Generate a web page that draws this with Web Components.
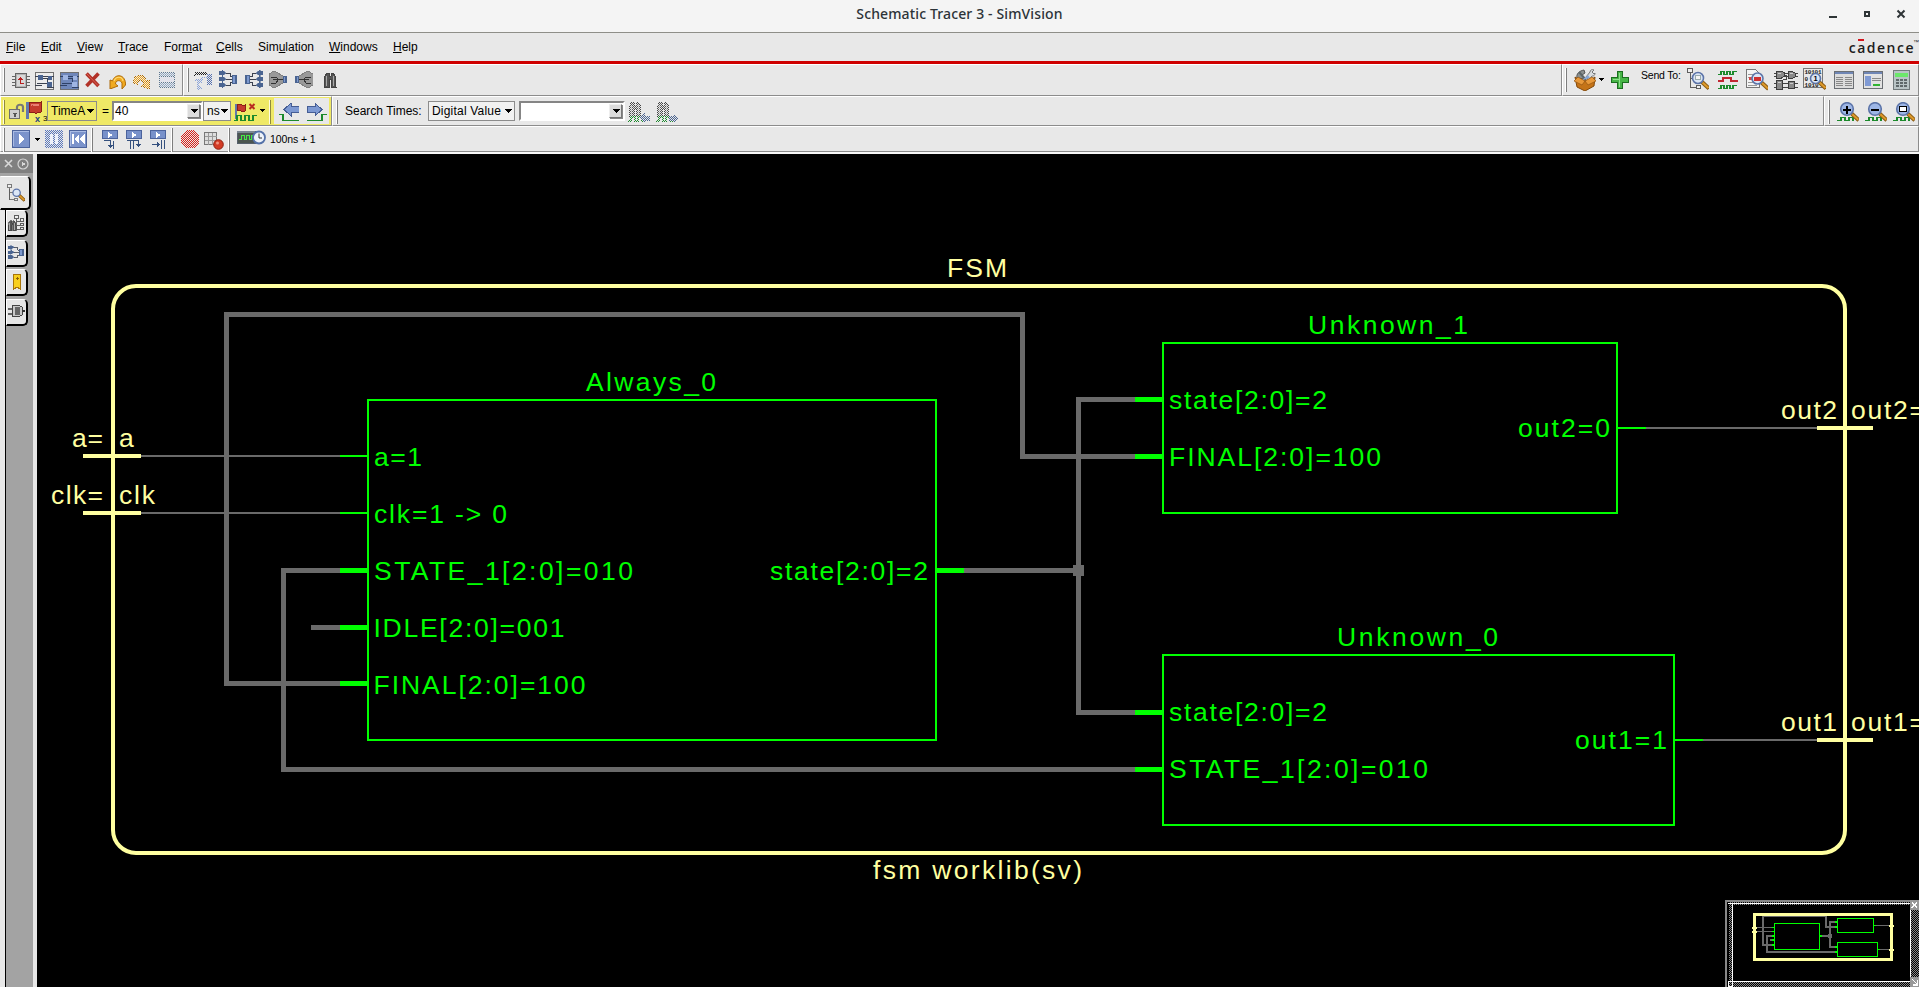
<!DOCTYPE html>
<html lang="en">
<head>
<meta charset="utf-8">
<title>Schematic Tracer 3 - SimVision</title>
<style>
html,body{margin:0;height:100%;overflow:hidden;background:#e8e8e8}
body{font:12px "Liberation Sans",Arial,sans-serif;color:#000}
</style>
</head>
<body>
<sim-window></sim-window>
<script>
const r=(x,y,w,h,f,s)=>`<rect x="${x}" y="${y}" width="${w}" height="${h}" fill="${f||'none'}"${s?` stroke="${s}"`:''}/>`;
const p=(d,f,s,w)=>`<path d="${d}" fill="${f||'none'}"${s?` stroke="${s}" stroke-width="${w||1}"`:''}/>`;
const soft=s=>`<g shape-rendering="auto">${s}</g>`;
const glass=(cx,cy,R,fill)=>soft(`<path d="M${cx+R-1.5} ${cy+R-1.5}L${cx+R+5.5} ${cy+R+5}" stroke="#8a5a12" stroke-width="4"/><path d="M${cx+R-1} ${cy+R-1}L${cx+R+5} ${cy+R+4.5}" stroke="#dd9a2c" stroke-width="2"/><circle cx="${cx}" cy="${cy}" r="${R}" fill="${fill||'#dbe6f6'}" stroke="#5c74a8" stroke-width="1.6"/>`);
const wave=(x,y)=>p(`M${x} ${y+4}h3v-4h4v4h3v-4h4v4h3v-4h4`,'', '#1c8a2c',1.6);
const dither=s=>`<defs><pattern id="k" width="2" height="2" patternUnits="userSpaceOnUse"><rect width="1" height="1" fill="#fff"/><rect x="1" y="1" width="1" height="1" fill="#fff"/></pattern><mask id="m" maskUnits="userSpaceOnUse" x="0" y="0" width="40" height="40"><rect width="40" height="40" fill="url(#k)"/></mask></defs><g mask="url(#m)">${s}</g>`;
const B='#4a6491', L='#7d99cf', K='#3c4250', G='#5e5e5e';
const schem=(bg,b,l)=>r(.5,.5,18,17,bg,'#707070')+p('M0 4.5h19M0 13.5h7M12 15.5h7M8 6.5h4.5v5h4M2 11.5h10','',l)+r(3,3,5,5,b)+r(13,4,4,4,b)+r(12,10,5,5,b);
const fan=r(0,1,5,4,B)+r(0,7,5,4,B)+r(0,13,5,4,B)+p('M4 3h4M4 9h4M4 15h4M3 0v6l4-3zM3 6v6l4-3zM3 12v6l4-3z',B,B,.6)+p('M7 3.5h4v3h4M7 9.5h7M7 15.5h4v-3h4','',K)+r(13,5,5,9,B)+r(14,6,2,7,L);
const binoc=p('M1 4l2-3h2v3l1 1 1-1V1h2l2 3 1 11H7V7H5v8H0z','#555','#444')+p('M2.5 4v10M9.500 4v10','','#aaa',1.5);
const cone=p('M0 3l5-3 11 6v5L5 17l-5-3z','#999','#808080')+p('M2 6h5l2 2.500h5M4 8.500h9M2 12h5l2-3','','#333')+r(14,5,4,7,B)+r(15,6,1,5,L);
const arrowL='M1 6.500l7-6.500v3.500h8v6H8v3.500z';
const playTile=s=>r(.5,.5,17,17,'#7b93cb','#4c639c')+p('M1.5 16V1.5H17','','#a9bbe4')+s;
const tree=r(.5,.5,5,4,'#eee',G)+p('M3.5 5v14.500M4 10.500h5M4 19.500h5','',G)+r(9.500,17.500,4,3,'#eee',G);
const step=s=>r(.5,.5,15,8,'#7891ca','#4c639c')+p('M6 2l5 3-5 3z','#fff')+s;
const ICONS={
 chip:[18,16,p('M0 3.5h18M0 6.500h18M0 9.500h18M0 12.500h18','','#666')+r(3.500,.5,11,14,'#b4b4b4','#666')+r(5,2,8,11,'#d8d8d8')+p('M12 10.500H8.500V5.500','','#b92020',1)+p('M6.500 6.500l2-2 2 2z','#b92020','#b92020',1)],
 schema:[20,18,schem('#ececec',B,K)], schemb:[19,18,schem('#6f87ba','#9fb5e2','#2f4268')],
 del:[15,16,soft(p('M1.500 1.500l12 12.500M13.500 1.500L1.500 14','','#b23228',3.6)+p('M2 2l11 11.500','','#d86052',1))],
 undo:[17,15,soft(p('M1 6v9l8-3-2.500-2c0-4 5-4.500 6.500-1v6l3.500-4C17 0 6-1 3.500 7z','#f0aa20','#ad6b0a')+p('M5 7C7 2 13 2 14 7','','#ffda75',1.200))],
 redo:[17,15,dither(p('M16 6v9l-8-3 2.500-2c0-4-5-4.500-6.500-1v2L.5 8C0 0 11-1 13.500 7z','#f0a010','#b06b00'))],
 dtable:[16,17,dither(r(.5,.5,15,15,'#8fa6c4','#5c7690')+p('M0 4.500h16M0 10.500h16','','#5c7690')+r(1,5,14,5,'#dde'))],
 dots:[19,19,dither(p('M1 1h12v3H1zM0 3h2v2H0z','#222')+r(13,3,5,11,'#5570b0')+p('M0 9h8v-3h5M3 8l5 3-5 3zM3 14l5 3-5 2z','#8ba4da','#8ba4da'))],
 fanin:[19,18,fan], fanout:[19,18,`<g transform="matrix(-1 0 0 1 19 0)">${fan}</g>`],
 cone:[19,17,cone],
 cone2:[19,17,`<g transform="matrix(-1 0 0 1 19 0)">${cone}</g>`],
 binoc:[13,16,binoc],
 box:[22,22,soft(p('M3 9C2 5 5 2 10 1l1 3-3 2 3 4z','#8b9090','#555')+p('M12 8l4-5c0-2 2-3 4-2l-2 2 2 2 1-1c0 3-2 3-3 3l-3 4z','#d7dcdf','#777')+p('M5 3l7 8','','#5d6668',2)+p('M8 11l6-5 2 3','#86a6d6')+p('M1 8l3 2 7 2 7-2 3-2-1 9-9 5-8-4z','#c57418','#82480a')+p('M0 12l4-4 7 4-3 4zM22 12l-4-4-7 4 3 4z','#e8993a','#935510',.7))],
 plus:[18,18,p('M6.500.500h5v6h6v5h-6v6h-5v-6h-6v-5h6z','#46b446','#1b6e20')+p('M8 2v6H2M8 9v7','','#8fe08c')],
 tree:[22,22,tree+glass(11,10,5.5)+r(8.500,7.500,5,4,'#f4f4f4','#9aa')],
 waves:[20,20,p('M0 4.500h3v-3h3v3h3v-3h3v3h3v-3h4','','#1c8a2c',1.6)+p('M0 11h5V8h8v3h7','','#c22732',1.6)+p('M0 18.500h3v-3h3v3h3v-3h3v3h3v-3h4','','#1c8a2c',1.6)],
 doc:[22,22,p('M.500.500h9l4 4v14H.500z','#f4f4f4','#777')+p('M2 5.500h8M2 8.500h7M2 13.500h8M2 16.500h9','','#999')+r(3,8,4,3,'#d64b4b')+glass(11.500,9.500,5.500)+r(8,8,7,4,'#d02f2f')],
 gates:[24,20,p('M0 3.500h24M0 6.500h24M0 13.500h24M0 17.500h24M10 5.500h2v4h-3','','#444')+p('M2.500 1h5l3 2v3l-3 2h-5zM14.500 1.500h4l3 2v3l-3 2h-4zM2.500 10.500h6v9h-6zM14.500 11.500h6v7h-6z','#8a8a8a','#3d3d3d')+p('M4 3h3M16 3.500h3M4 12h3M16 13h3','','#ccc')],
 binary:[23,22,r(.5,.5,19,19,'#e9e9e9','#777')+`<g font-family="Liberation Mono" font-size="6" font-weight="bold" fill="#222"><text x="1.500" y="6" textLength="17">10101</text><text x="1.500" y="12.700">0</text><text x="1.500" y="19" textLength="14">1010</text></g>`+glass(12.500,10.500,5)+`<text x="10.500" y="13.300" font-family="Liberation Sans" font-size="7.500" font-weight="bold">1</text>`],
 table:[20,19,r(.5,.5,19,17,'#dcdcdc','#6b6f74')+r(1,1,18,2,'#6f86b5')+p('M2 6.500h7M11 6.500h7M2 8.500h7M11 8.500h7M2 10.500h7M11 10.500h7M2 12.500h7M11 12.500h7M2 14.500h7M11 14.500h7','','#888')],
 win:[20,19,r(.5,.5,19,17,'#e2e2e2','#6b6f74')+r(1,1,18,2,'#6f86b5')+r(2,5,6,10,'#7f9ad4')+p('M9 7.500h9M9 9.500h9','','#888')+r(10,13,7,2,'#32b432')],
 calc:[17,20,r(.5,.5,16,19,'#b9c4c6','#727a7c')+r(2,3,13,4,'#6be86b')+p('M3 10h2.500M7 10h2.500M11 10h2.500M3 13h2.500M7 13h2.500M11 13h2.500M3 16h2.500M7 16h2.500M11 16h2.500','','#60696b',1.800)],
 lockflag:[38,22,soft(`<path d="M8 8V6c0-3 6-3 6 0v5" fill="none" stroke="#777" stroke-width="2.200"/>`)+r(.5,8.500,10,9,'#cfcfcf','#6f6f6f')+p('M4 12.500h4M6 13v3','','#555',1.5)+r(17,1,3,17,'#6278ad')+p('M20 2c4-3 5 2 12-1v10c-6 3-8-1-12 1z','#c43b2c','#8c1e16')+p('M22 4c3-1 5 1 8 0','','#e98172',1.5)+`<g font-family="Liberation Sans" font-weight="bold"><text x="26" y="20.500" font-size="9" fill="#223f80">x</text><text x="34" y="20" font-size="8" font-weight="normal">3</text></g>`],
 flagx:[24,19,r(1,1,2,15,'#6278ad')+p('M3 2c3-2 4 1 8 0v6c-3 1-5-1-8 0z','#c43b2c','#8c1e16')+soft(p('M15.500 1l5 5M20.500 1l-5 5','','#b92a20',2))+p('M0 17.500h3v-5h4v5h4v-5h4v5h4v-5h4','','#1c8a2c',1.400)],
 left:[20,19,p('M0 11.500h4v6h16','','#1c8a2c',1.600)+`<g transform="translate(4 0)">${p(arrowL,'#7d99d2','#455d94')}</g>`],
 right:[20,19,p('M0 17.500h15v-6h5','','#1c8a2c',1.600)+`<g transform="matrix(-1 0 0 1 16 0)">${p(arrowL,'#7d99d2','#455d94')}</g>`],
 binl:[22,21,dither(`<g transform="translate(1 0)">${binoc}</g>`+wave(0,16)+p('M12 17l4-4v2h5v4h-5v2z',B,B))],
 binr:[22,21,dither(`<g transform="translate(1 0)">${binoc}</g>`+wave(0,16)+p('M22 17l-4-4v2h-5v4h5v2z',B,B))],
 zin:[22,21,p('M0 18.500h4v-3h4v3h4v-3h4v3','','#1c8a2c',1.6)+glass(10,7,6.300,'#9db6e6')+p('M6 7.500h8M10 3.500v8','','#000',2)],
 zout:[22,21,p('M0 18.500h4v-3h4v3h4v-3h4v3','','#1c8a2c',1.6)+glass(10,7,6.300,'#9db6e6')+p('M6 7.500h8','','#000',2)],
 zfit:[22,21,p('M0 18.500h4v-3h4v3h4v-3h4v3','','#1c8a2c',1.6)+glass(10,7,6.300,'#9db6e6')+r(6.500,4.500,7,5,'#fff','#000')],
 play:[18,18,playTile(p('M7 4l6 5-6 5z','#fff'))],
 pause:[18,18,dither(r(0,0,18,18,'#5a78bc'))+r(5,4,3,10,'#eef2fb')+r(10,4,3,10,'#eef2fb')],
 rew:[18,18,playTile(r(3,4,2,10,'#fff')+p('M10 4v10L5 9zM15.500 4v10l-5-5z','#fff'))],
 step1:[16,19,step(p('M2 10.500h6.500v7M11.500 11v8','','#34507e',1)+p('M5.500 14.500h6L8.500 18z','#34507e'))],
 step2:[16,19,step(p('M1 10.500h11.500v6M4.500 11v8M7.500 11v8','','#34507e',1)+p('M9.500 14h6l-3 3.500z','#34507e'))],
 step3:[16,19,step(p('M2 14.500h6M11.500 10v9M14.500 10v9','','#34507e',1)+p('M6.500 11.500v6l3-3z','#34507e'))],
 stop:[18,18,dither(p('M5 0h8l5 5v8l-5 5H5l-5-5V5z','#d81f18'))],
 rec:[20,18,r(.5,.5,12,12,'#ddd','#777')+p('M4.500 1v12M8.500 1v12M1 4.500h12M1 8.500h12','','#999')+soft('<circle cx="14.500" cy="12.500" r="4.800" fill="#d23c26" stroke="#8e2112"/><circle cx="13.500" cy="11" r="1.500" fill="#f09380"/>')],
 simclock:[29,16,r(0,1,18,12,'#4b5550','#56606c')+r(0,1,18,2,'#7a8590')+p('M2 9.500h2v-4h3v4h2v-4h3v4h2v-4h2','','#46e746')+soft('<circle cx="22" cy="7.500" r="6" fill="#eef3fb" stroke="#5471a8" stroke-width="1.800"/><path d="M22 3.500v4.500h3" fill="none" stroke="#333"/>')],
 drop:[8,4,p('M0 0h8L4 4z','#000')], sdrop:[5,3,p('M0 0h5L2.500 3z','#000')],
 stree:[18,18,`<g transform="scale(.8)">${tree+p('M3.500 6v13.500','',G,1.500)+glass(12,11,4.600)}</g>`],
 sbin:[17,16,p('M8.500 4v10M8 6.500h7M8 10.500h7M8 14.500h7','',G)+r(6.500,.500,4,3,'#eee',G)+r(12.500,3.500,3,3,'#eee',G)+r(12.500,8.500,3,2,'#eee',G)+r(12.500,12.500,3,2,'#eee',G)+`<g transform="translate(0 5) scale(.7)">${binoc}</g>`],
 sfan:[17,15,`<g transform="scale(.87 .8)">${fan}</g>`],
 mark:[8,17,p('M.5.5h7v15l-3.500-2.500L.500 15.500z','#f8cf1d','#a87509')+p('M2.500 4.500h3M4 3v3','','#8d6107')],
 plug:[17,13,p('M0 3.500h5M0 8.500h5','','#666',2)+p('M4.500.500h7l3 2v7l-3 2h-7z','#c9c9c9','#444')+r(7,2,5,8,'#666')+p('M14 6h3','','#333',2)],
 hclose:[9,9,soft(p('M1 1l7 7M8 1L1 8','','#d8d8d8',1.6))],
 hplay:[12,12,soft('<circle cx="6" cy="6" r="5" fill="none" stroke="#d4d4d4" stroke-width="1.200"/>')+p('M4.500 3v6L8.500 6z','#d8d8d8')]
};
const def=(n,css,html)=>customElements.define(n,class extends HTMLElement{
 constructor(){super();this.attachShadow({mode:'open'});}
 connectedCallback(){this.shadowRoot.innerHTML=`<style>*{box-sizing:border-box}${css}</style>`+(typeof html=='function'?html(this):html);
 const g=this.getAttribute('gap'),t=this.getAttribute('top'),w=this.getAttribute('w');if(g)this.style.marginLeft=g+'px';if(t)this.style.marginTop=t+'px';if(w)this.style.width=w+'px';}});

def('tb-icon',':host{display:block;flex:none}svg{display:block}',e=>{const[w,h,s]=ICONS[e.getAttribute('name')];return `<svg width="${w}" height="${h}" viewBox="0 0 ${w} ${h}" shape-rendering="crispEdges">${s}</svg>`});
def('tb-grip',':host{display:block;flex:none;width:2px;height:24px;border-left:1px solid #fff;border-right:1px solid #7d7d7d;box-sizing:border-box}','');
def('tb-label',':host{display:block;flex:none;white-space:pre;line-height:14px}','<slot></slot>');
def('tb-group',':host{display:flex;flex:none;align-items:flex-start;box-sizing:border-box;height:100%;border:1px solid;border-color:#fff #8c8c8c #8c8c8c #fff;background:var(--tb,#e8e8e8)}:host([grow]){flex:1}','<slot></slot>');
def('tb-row',':host{display:flex;flex:none;height:var(--h)}','<slot></slot>');
def('tb-combo',':host{display:flex;flex:none;box-sizing:border-box;height:20px;border:1px solid #8c8c8c;align-items:center;justify-content:space-between;padding:0 2px 0 3px;background:var(--cb,#f1f1f1);white-space:pre}','<slot></slot><tb-icon name="drop"></tb-icon>');
def('tb-entry',':host{display:flex;flex:none;box-sizing:border-box;height:20px;border:2px solid;border-color:#858585 #fff #fff #858585;background:#fff;align-items:center;justify-content:space-between;padding-left:1px}b{display:flex;width:13px;height:14px;background:#dcdcdc;border:1px solid;border-color:#eee #777 #777 #eee;box-shadow:1px 1px #888;align-items:center;justify-content:center;margin-right:1px}','<slot></slot><b><tb-icon name="drop"></tb-icon></b>');
def('arrow-pair',':host{display:flex;flex:none;align-items:flex-start;height:26px;padding:5px 2px 0 5px;gap:8px;box-sizing:border-box;background:#e8e8e8}','<slot></slot>');

def('title-bar',':host{display:flex;flex:none;height:33px;background:#f4f4f4;border-bottom:1px solid #8e8e88;box-sizing:border-box;align-items:center;font:500 14px "Noto Sans","Open Sans",sans-serif;color:#2c3338}i{width:140px;flex:none}span{flex:1;text-align:center;padding-bottom:5px;letter-spacing:.13px}svg{flex:none}','<i></i><span>Schematic Tracer 3 - SimVision</span><svg width="140" height="32" shape-rendering="crispEdges"><path d="M50 16.500h8" stroke="#2e3436" stroke-width="2"/><rect x="86" y="12" width="4" height="4" fill="none" stroke="#2e3436" stroke-width="2"/><path d="M118.500 10.500l7 7M125.500 10.500l-7 7" stroke="#2e3436" stroke-width="2" shape-rendering="auto"/></svg>');
def('menu-item',':host{display:block;flex:none}u{text-underline-offset:2px;text-decoration-thickness:1px}','<slot></slot>');
def('cadence-logo',':host{display:flex;position:relative;margin-left:auto;margin-right:0;align-items:flex-start;color:#1c1c1c;font:600 14px/20px "Open Sans","Noto Sans",sans-serif;letter-spacing:1.5px}em{position:absolute;left:9px;top:1px;width:6px;height:2px;background:#d4141c}sup{font:6px/8px "Liberation Sans";letter-spacing:0;margin-left:-2px}','<em></em><span>cadence</span><sup>™</sup>');
def('menu-bar',':host{display:flex;flex:none;height:31px;background:#e8e8e8;border-bottom:3px solid #cf0000;box-sizing:border-box;padding:5px 0 0 6px;line-height:18px}','<slot></slot>');

def('side-tab',':host{display:flex;box-sizing:border-box;width:22px;height:27px;margin:0 0 2.6px 6px;background:#e6e6e6;border:1px solid;border-color:#fff #000 #000 #fff;border-right-width:2px;border-bottom-width:2px;border-radius:0 5px 5px 0;align-items:center;justify-content:center}:host([active]){width:31px;height:34px;margin:0;border-color:#fff #000 #000 #e6e6e6;padding-left:1px}','<slot></slot>');
def('side-bar',':host{display:flex;flex-direction:column;flex:none;width:37px;background:#a3a3a3;border-right:4px solid #e8e8e8;box-sizing:border-box}header{display:flex;align-items:center;gap:4px;height:19px;background:#808080;padding-left:4px;flex:none}section{flex:1;margin-top:3px;background:linear-gradient(90deg,#e8e8e8 5px,#000 5px,#000 6px,transparent 6px)}',`<header><tb-icon name="hclose"></tb-icon><tb-icon name="hplay"></tb-icon></header><section>
<side-tab active><tb-icon name="stree"></tb-icon></side-tab><side-tab><tb-icon name="sbin"></tb-icon></side-tab><side-tab><tb-icon name="sfan"></tb-icon></side-tab><side-tab><tb-icon name="mark"></tb-icon></side-tab><side-tab><tb-icon name="plug"></tb-icon></side-tab></section>`);

const T=(x,y,s,len)=>`<text x="${x}" y="${y}"${len?` textLength="${len}"`:''}>${s.replace('>','&gt;')}</text>`;
def('schematic-canvas',':host{display:block;position:relative;flex:1;min-width:0;background:#000;overflow:hidden}svg{display:block}text{font:26.5px "Liberation Sans",Arial,sans-serif;letter-spacing:2px;white-space:pre}.b{fill:none;stroke:#6a6a6a;stroke-width:5}.t{fill:none;stroke:#6a6a6a;stroke-width:2}.g{fill:none;stroke:#0f0;stroke-width:2}.G{stroke:#0f0;stroke-width:5}.y{fill:none;stroke:#ffffa0;stroke-width:4}',`
<svg width="1882" height="833" viewBox="37 154 1882 833" shape-rendering="crispEdges">
<path class="b" d="M340 683.500H226.500V314.500H1022V456.500H1135M340 570.500H283.500V769.500H1135M311 627.500h29M964 570.500H1078.500M1135 399.500H1078.500V712.500H1135"/>
<path class="t" d="M141 456H340M141 513H340M1646 428H1817M1703 740H1817"/>
<rect x="1073" y="565" width="11" height="11" fill="#6a6a6a"/>
<rect class="y" x="113" y="286" width="1732" height="567" rx="23" shape-rendering="auto"/>
<path class="y" d="M83 456h58M83 513h58M1817 428h56M1817 740h56"/>
<path class="g" d="M368 400H936V740H368zM1163 343H1617V513H1163zM1163 655H1674V825H1163zM340 456h28M340 513h28M1617 428h29M1674 740h29"/>
<path class="G" d="M340 570.500h28M340 627.500h28M340 683.500h28M936 570.500h28M1135 399.500h28M1135 456.500h28M1135 712.500h28M1135 769.500h28"/>
<g fill="#0f0">${T(586,391,'Always_0',132)}${T(374,466,'a=1',50)}${T(374,523,'clk=1 -> 0',135)}${T(374,580,'STATE_1[2:0]=010',261)}${T(373.5,637,'IDLE[2:0]=001',193)}${T(373.5,694,'FINAL[2:0]=100',214)}${T(770,580,'state[2:0]=2',160)}
${T(1308,334,'Unknown_1',162)}${T(1169,409,'state[2:0]=2',160)}${T(1169,466,'FINAL[2:0]=100',214)}${T(1518,437,'out2=0',94)}
${T(1337,646,'Unknown_0',163)}${T(1169,721,'state[2:0]=2',160)}${T(1169,778,'STATE_1[2:0]=010',261)}${T(1575,749,'out1=1',94)}</g>
<g fill="#ffffa0">${T(947,277,'FSM',62)}${T(873,879,'fsm worklib(sv)',211)}${T(72,447,'a=',33)}${T(119,447,'a')}${T(51,504,'clk=',54)}${T(119,504,'clk',38)}${T(1781,419,'out2',58)}${T(1851,419,'out2=',76)}${T(1781,731,'out1',58)}${T(1851,731,'out1=',76)}</g>
</svg><mini-map></mini-map>`);
def('mini-map',':host{display:block;position:absolute;right:0;bottom:0;width:194px;height:87px;background:#000}svg{display:block}',`<svg width="194" height="87" viewBox="1725 900 194 87" shape-rendering="crispEdges" fill="none">
<defs><pattern id="d" width="2" height="2" patternUnits="userSpaceOnUse"><rect width="1" height="1" fill="#888"/><rect x="1" y="1" width="1" height="1" fill="#888"/></pattern></defs>
<path d="M1729 902h190v85h-190z" fill="url(#d)"/><path d="M1733 905h177v76h-177z" fill="#000"/><path d="M1727 902h2v85h-2z" fill="#000"/>
<path d="M1725 901h194M1726 900v87" stroke="#888" stroke-width="2"/><path d="M1728 903.500h182.500V987M1732.500 903v84M1728 981.500h182M1728.500 987v-5M1728 986.500h5" stroke="#fff"/>
<path d="M1774 945h-11v-29h63v11h11M1774 936h-7v16h70M1774 940h-4M1820 936h10M1837 922h-7v25h7" stroke="#6a6a6a" stroke-width="2"/><path d="M1828 934h4v4h-4z" fill="#6a6a6a"/>
<path d="M1756 927.500h18M1756 931.500h18M1874 925.500h17M1878 949.500h13" stroke="#6a6a6a"/>
<path d="M1754.500 914.500h137v45h-137z" stroke="#ffffa0" stroke-width="3"/><path d="M1752 927.500h5M1752 931.500h5M1889 925.500h5M1889 949.500h5" stroke="#ffffa0" stroke-width="2"/>
<path d="M1774.500 923.500h45v26h-45zM1837.500 918.500h36v14h-36zM1837.500 942.500h40v14h-40zM1772 927.500h2M1772 931.500h2M1874 925.500h2M1878 949.500h2" stroke="#0f0"/><path d="M1772 936h2M1772 940h2M1772 945h2M1820 936h2M1835 922h2M1835 927h2M1835 947h2M1835 952h2" stroke="#0f0" stroke-width="2"/>
<path d="M1910 900h9v10h-9zM1910 977h9v10h-9z" fill="#999"/><path d="M1912 902l5 6M1917 902l-5 6M1912 979l5 5M1917.500 980v5h-5" stroke="#fff" stroke-width="1.400"/></svg>`);

const I=(n,g,t)=>`<tb-icon name="${n}" gap="${g}" top="${t}"></tb-icon>`, H=(g,t)=>`<tb-grip gap="${g}" top="${t}"></tb-grip>`;
def('sim-window',':host{display:flex;flex-direction:column;height:987px;width:1919px;overflow:hidden}main{display:flex;flex:1;min-height:0}.pad{flex:none;height:2px;background:#f8f8f8}.yel{--tb:#efe966;--cb:#efe966}.yel tb-grip{border-left-color:#fffce0;border-right-color:#8f8a3c}',`
<title-bar></title-bar>
<menu-bar>${['<u>F</u>ile','<u>E</u>dit','<u>V</u>iew','<u>T</u>race','For<u>m</u>at','<u>C</u>ells','Sim<u>u</u>lation','<u>W</u>indows','<u>H</u>elp'].map((s,i)=>{const x=[6,41,77,118,164,216,258,329,393,430];return `<menu-item style="width:${x[i+1]-x[i]}px">${s}</menu-item>`}).join('')}<cadence-logo></cadence-logo></menu-bar>
<tb-row style="--h:32px"><tb-group w="183">${H(2,3)+I('chip',7,8)+I('schema',5,7)+I('schemb',5,7)+I('del',6,7)+I('undo',9,9)+I('redo',7,9)+I('dtable',9,7)}</tb-group>
<tb-group grow>${H(3,3)+I('dots',5,6)+I('fanin',6,5)+I('fanout',6,5)+I('cone',6,6)+I('cone2',6,6)+I('binoc',11,7)}</tb-group>
<tb-group w="357">${H(2,3)+I('box',7,4)+I('sdrop',3,13)+I('plus',7,6)}<tb-label gap="12" top="3" w="46" style="font-size:10.500px;letter-spacing:-.2px">Send To:</tb-label>${I('tree',0,3)+I('waves',9,5)+I('doc',8,4)+I('gates',6,5)+I('binary',5,3)+I('table',8,6)+I('win',9,6)+I('calc',10,5)}</tb-group></tb-row>
<tb-row style="--h:30px"><tb-group class="yel" w="332">${H(2,3)+I('lockflag',4,4)}<tb-combo top="4" w="50">TimeA</tb-combo><tb-label gap="5" top="7" w="10">=</tb-label><tb-entry top="4" w="91">40</tb-entry><tb-combo top="4" w="28" style="--cb:#f1f1f1">ns</tb-combo>${I('flagx',3,6)+I('sdrop',2,12)+H(4,3)}<arrow-pair gap="3" top="1" w="55">${I('left',0,0)+I('right',0,0)}</arrow-pair></tb-group>
<tb-group grow>${H(3,3)}<tb-label gap="7" top="7" w="83">Search Times:</tb-label><tb-combo top="4" w="87" style="letter-spacing:.2px">Digital Value</tb-combo><tb-entry gap="4" top="4" w="106"><span></span></tb-entry>${I('binl',3,4)+I('binr',6,4)}</tb-group>
<tb-group w="95">${H(3,3)+I('zin',7,5)+I('zout',6,5)+I('zfit',6,5)}</tb-group></tb-row>
<tb-row style="--h:26px"><tb-group grow>${H(2,1)+I('play',7,3)+I('sdrop',5,11)+I('pause',5,3)+I('rew',6,3)+H(4,1)+I('step1',9,3)+I('step2',8,3)+I('step3',8,3)+H(5,1)+I('stop',8,3)+I('rec',5,5)+H(4,1)+I('simclock',7,3)}<tb-label gap="4" top="5" style="font-size:10.500px;letter-spacing:-.1px">100ns + 1</tb-label></tb-group></tb-row>
<div class="pad"></div>
<main><side-bar></side-bar><schematic-canvas></schematic-canvas></main>`);
</script>
</body>
</html>
